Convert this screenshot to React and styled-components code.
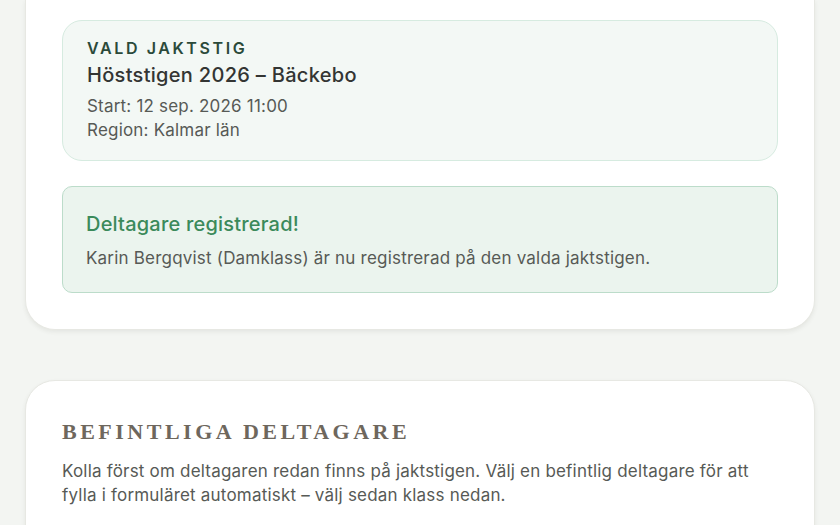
import React from "react";
import styled, { createGlobalStyle } from "styled-components";

const Global = createGlobalStyle`
  html, body { margin: 0; padding: 0; background: #f3f5f2; }
  body { font-family: Inter, "Noto Sans", sans-serif; -webkit-font-smoothing: antialiased; }
  * { box-sizing: border-box; }
`;

const Page = styled.div`
  display: flex;
  flex-direction: column;
  gap: 50px;
  padding: 0 25px;
  width: 840px;
  height: 525px;
  overflow: hidden;
`;

const Card = styled.section`
  background: #ffffff;
  border: 1px solid #e7e8e3;
  border-top: ${(p) => (p.$cutTop ? "none" : "1px solid #e7e8e3")};
  border-radius: ${(p) => (p.$cutTop ? "0 0 30px 30px" : "30px 30px 0 0")};
  box-shadow: 0 2px 4px rgba(60, 70, 55, 0.08);
  padding: ${(p) => (p.$cutTop ? "20px 36px 36px" : "36px 36px 40px")};
  display: flex;
  flex-direction: column;
  gap: ${(p) => p.$gap || "0px"};
  flex-shrink: 0;
`;

const TrailBox = styled.div`
  background: #f3f8f5;
  border: 1px solid #d6ebe0;
  border-radius: 20px;
  padding: 17px 24px 18px;
  display: flex;
  flex-direction: column;
`;

const Eyebrow = styled.div`
  font-size: 16px;
  line-height: 20px;
  font-weight: 600;
  letter-spacing: 2.6px;
  color: #2b4a3a;
  text-transform: uppercase;
`;

const TrailTitle = styled.div`
  font-size: 20px;
  line-height: 28px;
  font-weight: 500;
  letter-spacing: 0.3px;
  color: #333533;
  margin-top: 3px;
  margin-bottom: 5px;
`;

const Meta = styled.div`
  font-size: 17px;
  line-height: 24px;
  letter-spacing: 0.2px;
  color: #575a56;
`;

const Notice = styled.div`
  background: #ebf4ee;
  border: 1px solid #bcdcca;
  border-radius: 10px;
  padding: 23px 23px 22px;
  display: flex;
  flex-direction: column;
  gap: 8px;
`;

const NoticeTitle = styled.div`
  font-size: 20px;
  line-height: 28px;
  font-weight: 500;
  letter-spacing: 0.2px;
  color: #3b8a5b;
`;

const NoticeText = styled.div`
  font-size: 17px;
  line-height: 24px;
  letter-spacing: 0.2px;
  color: #575a56;
`;

const SectionHeading = styled.h2`
  margin: 0;
  font-family: "Liberation Serif", "DejaVu Serif", serif;
  font-weight: 700;
  font-size: 22px;
  line-height: 30px;
  letter-spacing: 3.5px;
  color: #6e675d;
  text-transform: uppercase;
`;

const Lead = styled.p`
  margin: 12px 0 0;
  font-size: 17px;
  line-height: 24px;
  letter-spacing: 0.2px;
  color: #575a56;
  max-width: 716px;
`;

export default function App() {
  return (
    <>
      <Global />
      <Page>
        <Card $cutTop $gap="25px">
          <TrailBox>
            <Eyebrow>Vald jaktstig</Eyebrow>
            <TrailTitle>Höststigen 2026 – Bäckebo</TrailTitle>
            <Meta>Start: 12 sep. 2026 11:00</Meta>
            <Meta>Region: Kalmar län</Meta>
          </TrailBox>
          <Notice>
            <NoticeTitle>Deltagare registrerad!</NoticeTitle>
            <NoticeText>
              Karin Bergqvist (Damklass) är nu registrerad på den valda jaktstigen.
            </NoticeText>
          </Notice>
        </Card>
        <Card>
          <SectionHeading>Befintliga deltagare</SectionHeading>
          <Lead>
            Kolla först om deltagaren redan finns på jaktstigen. Välj en befintlig deltagare för att
            fylla i formuläret automatiskt – välj sedan klass nedan.
          </Lead>
        </Card>
      </Page>
    </>
  );
}
